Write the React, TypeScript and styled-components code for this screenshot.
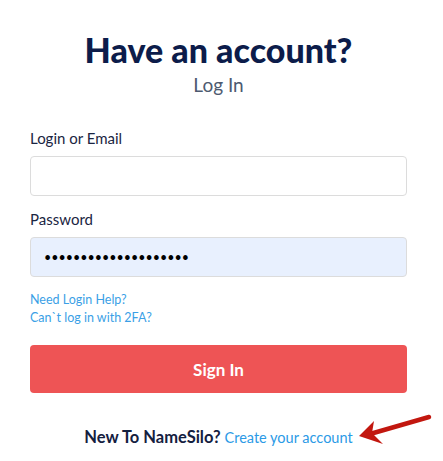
import React from 'react'
import styled, { createGlobalStyle } from 'styled-components'

const GlobalStyle = createGlobalStyle`
  body {
    margin: 0;
    background: #fff;
    font-family: 'Lato', 'Liberation Sans', sans-serif;
  }
`

const App: React.FC = () => {
  return (
    <>
      <GlobalStyle />
      <Page>
        <Header>
          <Title>Have an account?</Title>
          <Subtitle>Log In</Subtitle>
        </Header>
        <Form onSubmit={(e) => e.preventDefault()}>
          <Field>
            <Label htmlFor="login">Login or Email</Label>
            <Input id="login" type="text" />
          </Field>
          <Field>
            <Label htmlFor="password">Password</Label>
            <Input
              id="password"
              type="password"
              defaultValue="aaaaaaaaaaaaaaaaaaaa"
              $filled
            />
          </Field>
          <HelpLinks>
            <HelpLink href="#">Need Login Help?</HelpLink>
            <HelpLink href="#">Can`t log in with 2FA?</HelpLink>
          </HelpLinks>
          <SubmitButton type="submit">Sign In</SubmitButton>
        </Form>
        <Footer>
          New To NameSilo? <FooterLink href="#">Create your account</FooterLink>
          <Arrow width="80" height="34" viewBox="0 0 80 34">
            <path
              d="M71 3 L12 20"
              stroke="#c2170f"
              strokeWidth="4.5"
              strokeLinecap="round"
            />
            <path d="M1 22 L16 7 L14 19 L25 30 Z" fill="#c2170f" />
          </Arrow>
        </Footer>
      </Page>
    </>
  )
}

export default App

const Page = styled.div`
  width: 377px;
  margin-left: 30px;
  padding-top: 30px;
`

const Header = styled.div`
  text-align: center;
  margin-bottom: 30px;
`

const Title = styled.h1`
  margin: 0;
  font-size: 34px;
  line-height: 40px;
  font-weight: 900;
  color: #0c1c4a;
`

const Subtitle = styled.h2`
  margin: 2px 0 0;
  font-size: 19px;
  line-height: 26px;
  font-weight: 400;
  color: #4d5a70;
`

const Form = styled.form`
  display: flex;
  flex-direction: column;
`

const Field = styled.div`
  display: flex;
  flex-direction: column;
  margin-bottom: 13px;
`

const Label = styled.label`
  font-size: 15px;
  line-height: 20px;
  color: #1a2542;
  margin-bottom: 8px;
`

const Input = styled.input<{ $filled?: boolean }>`
  box-sizing: border-box;
  width: 100%;
  height: 40px;
  padding: 0 13px;
  border: 1px solid #dcdcdc;
  border-radius: 4px;
  background: ${(p) => (p.$filled ? '#e8f0fe' : '#fff')};
  font-family: inherit;
  font-size: 12.5px;
  color: #000;
  outline: none;
`

const HelpLinks = styled.div`
  display: flex;
  flex-direction: column;
  margin-top: 1px;
  margin-bottom: 19px;
`

const HelpLink = styled.a`
  font-size: 12.5px;
  line-height: 17.5px;
  color: #3b9fe6;
  text-decoration: none;
`

const SubmitButton = styled.button`
  height: 48px;
  border: none;
  border-radius: 4px;
  background: #ee5455;
  color: #fff;
  font-family: inherit;
  font-size: 17px;
  font-weight: 700;
  cursor: pointer;
`

const Footer = styled.div`
  position: relative;
  margin-top: 34px;
  text-align: center;
  font-size: 16.5px;
  font-weight: 700;
  color: #14203f;
`

const FooterLink = styled.a`
  font-size: 14.5px;
  font-weight: 400;
  color: #2b9ae6;
  text-decoration: none;
`

const Arrow = styled.svg`
  position: absolute;
  left: 328px;
  top: -13px;
`
